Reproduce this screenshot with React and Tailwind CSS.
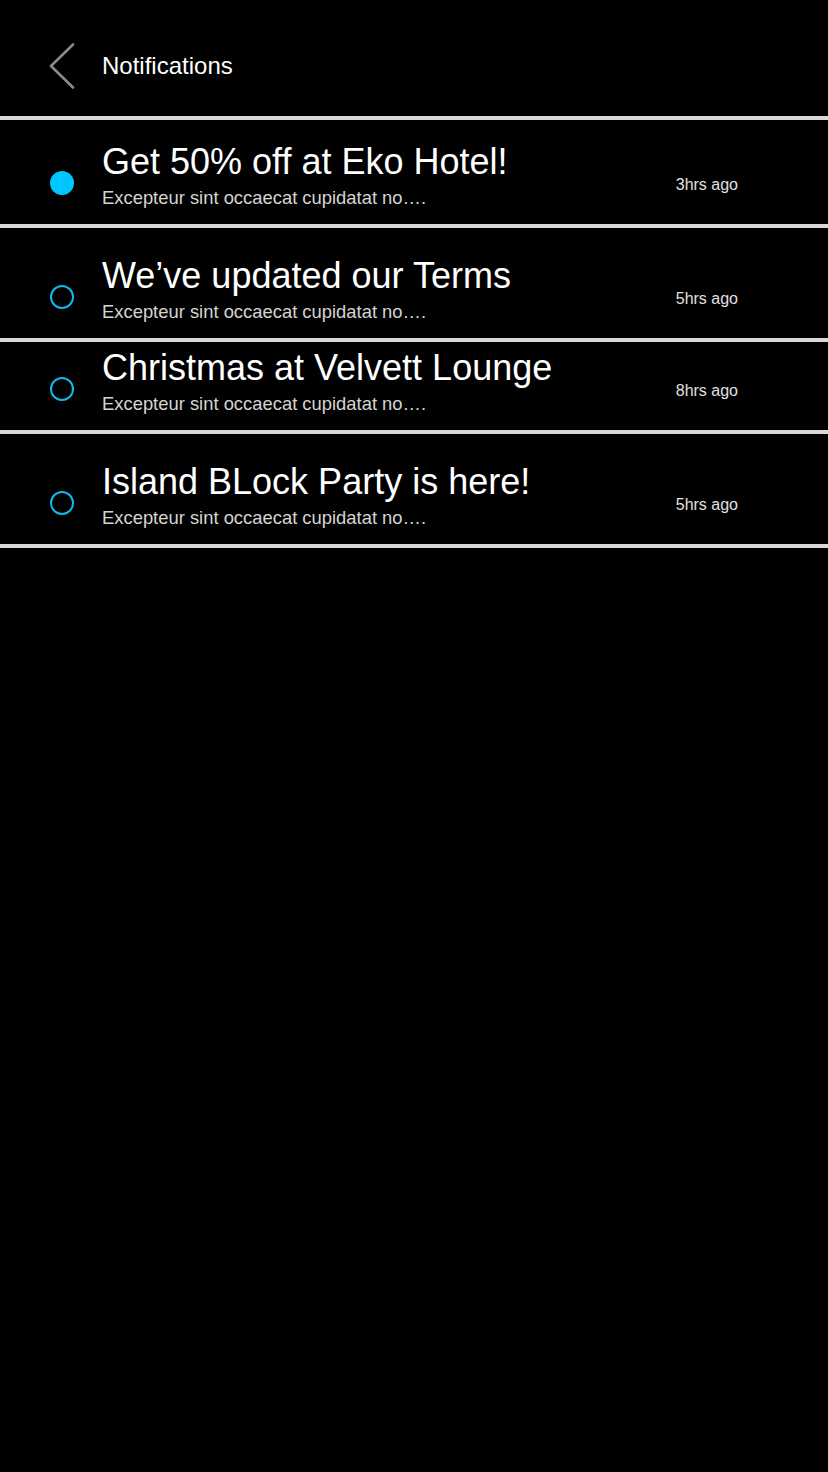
import React from "react";

const notifications = [
  { id: 1, title: "Get 50% off at Eko Hotel!", time: "3hrs ago", unread: true, h: "h-[108px]" },
  { id: 2, title: "We’ve updated our Terms", time: "5hrs ago", unread: false, h: "h-[114px]" },
  { id: 3, title: "Christmas at Velvett Lounge", time: "8hrs ago", unread: false, h: "h-[92px]" },
  { id: 4, title: "Island BLock Party is here!", time: "5hrs ago", unread: false, h: "h-[114px]" },
];

const BackIcon = () => (
  <svg width="26" height="46" viewBox="0 0 26 46" fill="none">
    <path d="M24 1.5 L2 23 L24 44.5" stroke="#8a8a8a" strokeWidth="2.6" strokeLinecap="round" strokeLinejoin="round" />
  </svg>
);

const NotificationRow = ({ item }) => (
  <div className={`${item.h} flex items-end pb-[15px] pr-[90px] border-b-4 border-[#d9d9d9]`}>
    <div className="w-[102px] flex justify-start pl-[50px] mb-[14px]">
      {item.unread ? (
        <span className="block w-6 h-6 rounded-full bg-[#00c6ff]"></span>
      ) : (
        <span className="block w-6 h-6 rounded-full border-2 border-[#10b8ec]"></span>
      )}
    </div>
    <div className="flex-1 min-w-0">
      <h2 className="text-[36px] leading-[40px] text-white">{item.title}</h2>
      <p className="mt-[5px] text-[18.4px] leading-[22px] text-[#d4d4d4]">
        Excepteur sint occaecat cupidatat no….
      </p>
    </div>
    <span className="mb-[14px] text-[16px] leading-[20px] text-[#e0e0e0]">{item.time}</span>
  </div>
);

const App = () => {
  return (
    <div className="min-h-[1472px] bg-black font-['Liberation_Sans',Arial,sans-serif]">
      <header className="h-[120px] pt-4 flex items-center border-b-4 border-[#d9d9d9]">
        <button className="ml-[49px] w-[53px] flex items-center">
          <BackIcon />
        </button>
        <h1 className="text-[24px] text-white">Notifications</h1>
      </header>

      <div>
        {notifications.map((item) => (
          <NotificationRow key={item.id} item={item} />
        ))}
      </div>
    </div>
  );
};

export default App;
